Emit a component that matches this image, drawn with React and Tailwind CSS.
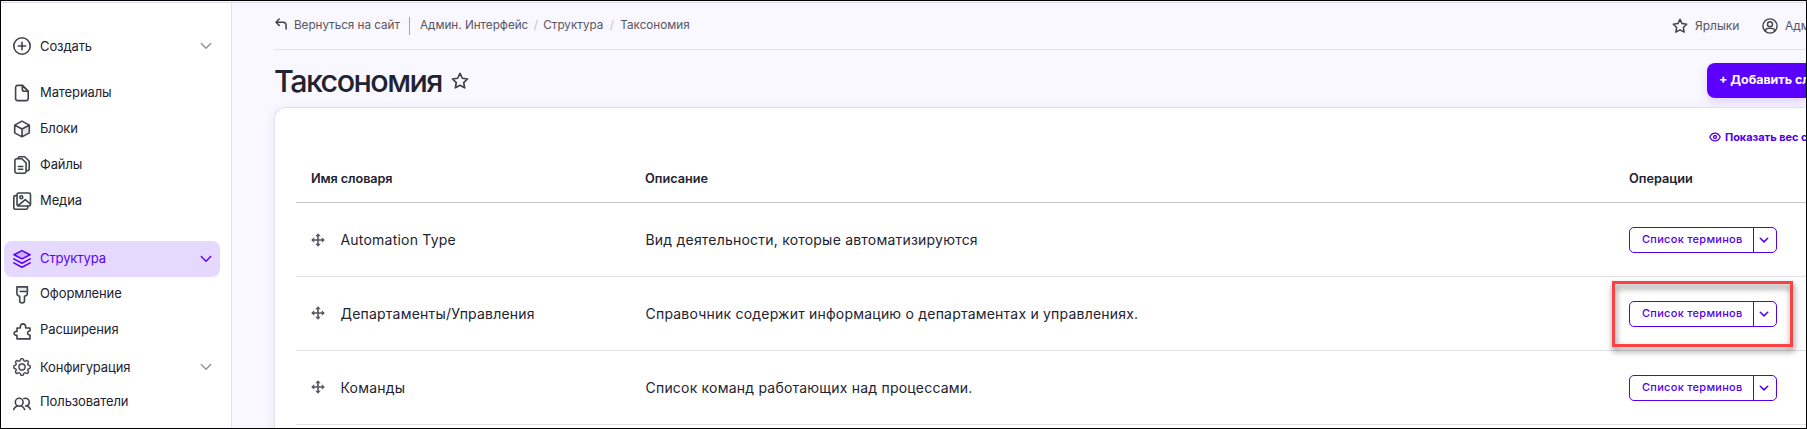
import React from "react";
import { BsGear } from "react-icons/bs";

function Svg({ children, className = "size-5", box = "0 0 20 20", width = 1.6 }) {
  return (
    <svg
      viewBox={box}
      className={"block shrink-0 " + className}
      fill="none"
      stroke="currentColor"
      strokeWidth={width}
      strokeLinecap="round"
      strokeLinejoin="round"
    >
      {children}
    </svg>
  );
}

const icons = {
  plus: (
    <Svg>
      <circle cx="10" cy="10" r="8.2" />
      <path d="M10 6.3v7.4M6.3 10h7.4" />
    </Svg>
  ),
  file: (
    <Svg>
      <path d="M10.3 3.4H5.6a2 2 0 0 0-2 2v11.2a2 2 0 0 0 2 2h8.6a2 2 0 0 0 2-2V9.3z" />
      <path d="M10.3 3.4v3.9a2 2 0 0 0 2 2h3.9z" fill="#e4e5e7" />
    </Svg>
  ),
  box: (
    <Svg>
      <path d="M17.3 7.1v7.8L10 18.9v-8z" fill="#e4e5e7" stroke="none" />
      <path d="M10 3.1l7.3 4v7.8l-7.3 4-7.3-4V7.1zM2.9 7.2L10 11l7.1-3.8M10 11v7.7" />
    </Svg>
  ),
  files: (
    <Svg>
      <path d="M4.8 4.7h5.1l4.2 4.2v8.4a1.9 1.9 0 0 1-1.9 1.9H4.8a1.9 1.9 0 0 1-1.9-1.9V6.6a1.9 1.9 0 0 1 1.9-1.9z" />
      <path d="M6 4.5c0-1 .7-1.7 1.7-1.7h5l4.5 4.4v7.6c0 1.3-.9 2-2.6 2.2M6.4 12.5h4.4M6.4 15.3h4.4" />
    </Svg>
  ),
  media: (
    <Svg>
      <rect x="5" y="3" width="13.5" height="13" rx="1.6" />
      <circle cx="9.3" cy="7.2" r="1.5" />
      <path d="M6 15.7l7.3-6.1 5 4.4" />
      <path d="M4.7 5.6H3.3a1.5 1.5 0 0 0-1.5 1.5v10.4a1.7 1.7 0 0 0 1.7 1.7h10.7a1.5 1.5 0 0 0 1.5-1.5v-1.4" />
    </Svg>
  ),
  layers: (
    <Svg>
      <path d="M10 1.6l8 4.1-8 4.2-8-4.2z" fill="#cdb2fb" />
      <path d="M1.8 9.9l8.2 4.3 8.2-4.3M1.8 13.9l8.2 4.3 8.2-4.3" />
    </Svg>
  ),
  brush: (
    <Svg>
      <path d="M5 2h10.4v4.8H5z" fill="#e4e5e7" stroke="none" />
      <path d="M4.9 1.9h10.5v6.4c0 1.7-1.2 2.6-2.9 2.9v4.4a2.4 2.4 0 0 1-4.8 0v-4.4c-1.7-.3-2.8-1.2-2.8-2.9zM15.2 6.5H8.4" />
    </Svg>
  ),
  puzzle: (
    <Svg>
      <path d="M5 7h3.4C8 4.5 9.1 2.9 11 2.9s3 1.6 2.6 4.1H18v3c-3.2-.6-3.2 4.6 0 4v3.9H5v-3.6c-3.9.5-3.9-4.4 0-3.9z" />
    </Svg>
  ),
  gear: <BsGear className="mx-px size-[18px] shrink-0" stroke="currentColor" strokeWidth="0.3" />,
  users: (
    <Svg>
      <circle cx="7.2" cy="9.2" r="3.9" />
      <path d="M1.7 16.4c.7-1.6 2-2.7 3.5-3.3M9.3 13.1c1.5.6 2.6 1.7 3.3 3.3M11.9 5.6c2.6-1.2 5.4.6 5.4 3.5 0 2.4-1.7 3.9-3.8 3.9h1.4c1.7.4 2.9 1.6 3.5 3.3" />
    </Svg>
  ),
};

function Star({ className }) {
  return (
    <Svg className={className} box="0 0 16 16" width={1.5}>
      <path d="M8 1.3l2.05 4.25 4.65.65-3.4 3.25.85 4.65L8 11.85 3.85 14.1l.85-4.65L1.3 6.2l4.65-.65z" />
    </Svg>
  );
}

function Chevron({ className }) {
  return (
    <Svg className={className} box="0 0 12 12" width={1.4}>
      <path d="M1.3 3.5L6 8.2l4.7-4.7" />
    </Svg>
  );
}

function NavItem({ icon, label, chevron, active, className = "", lift = "" }) {
  return (
    <li
      className={
        "flex h-9 w-[216px] items-center rounded-lg pr-[9px] pl-2 " +
        (active ? "bg-[#e6d9ff] text-[#5b00ff] " : "text-[#414349] ") +
        className
      }
    >
      {icons[icon]}
      <span
        className={
          "ml-2 flex-1 text-[13px] leading-5 tracking-[-0.1px] " +
          (active ? "text-[#5b00ff] " : "text-[#222330] ") +
          lift
        }
      >
        {label}
      </span>
      {chevron && <Chevron className={"mr-[-0.5px] size-3 " + (active ? "" : "text-[#8e929c]")} />}
    </li>
  );
}

function Sidebar() {
  return (
    <nav className="w-[231px] shrink-0 border-r border-[#e3e1ec] bg-white pt-[25px] pl-[3px]">
      <ul>
        <NavItem icon="plus" label="Создать" chevron />
        <NavItem icon="file" label="Материалы" className="mt-2.5" />
        <NavItem icon="box" label="Блоки" />
        <NavItem icon="files" label="Файлы" />
        <NavItem icon="media" label="Медиа" />
        <NavItem icon="layers" label="Структура" chevron active className="mt-[23px]" lift="pb-0.5" />
        <NavItem icon="brush" label="Оформление" lift="pb-1" />
        <NavItem icon="puzzle" label="Расширения" lift="pb-1" />
        <NavItem icon="gear" label="Конфигурация" chevron />
        <NavItem icon="users" label="Пользователи" lift="pb-1" />
      </ul>
    </nav>
  );
}

function TopBar() {
  return (
    <header className="flex h-[47px] items-center border-b border-[#e2e0ea] text-[11.7px] whitespace-nowrap text-[#55565f]">
      <Svg className="mb-1 ml-px size-3 text-[#414349]" box="0 0 12 12" width={1.5}>
        <path d="M4.2 1L1 4.2l3.2 3.2M1.2 4.2h6.6a3.3 3.3 0 0 1 3.3 3.3v3.4" />
      </Svg>
      <span className="ml-[7px] w-[106px] tracking-[-0.03px]">Вернуться на сайт</span>
      <span className="ml-[9px] h-[18px] w-px bg-[#a5a4b0]" />
      <nav className="ml-[10px] flex items-center">
        <span>Админ. Интерфейс</span>
        <span className="w-[15px] text-center text-[#c3c2cc]">/</span>
        <span>Структура</span>
        <span className="w-[17px] text-center text-[#c3c2cc]">/</span>
        <span>Таксономия</span>
      </nav>
      <div className="ml-auto flex w-[134px] shrink-0 items-center">
        <Star className="size-4 text-[#414349]" />
        <span className="ml-[7px] w-[66px] shrink-0 text-[12px]">Ярлыки</span>
        <Svg className="ml-px size-4 text-[#414349]" box="0 0 16 16" width={1.4}>
          <circle cx="8" cy="8" r="7.1" />
          <circle cx="8" cy="6.3" r="2.5" />
          <path d="M3.3 13.1c.3-1.9 1.5-2.7 3-2.7h3.4c1.5 0 2.7.8 3 2.7" />
        </Svg>
        <span className="ml-[7px] text-[12px]">Админ</span>
      </div>
    </header>
  );
}

function MoveIcon({ className }) {
  return (
    <svg viewBox="0 0 14 14" className={"size-3.5 shrink-0 text-[#545560] " + className} fill="currentColor">
      <path d="M6.2 2.5h1.6v9H6.2zM2.5 6.2h9v1.6h-9z" />
      <path d="M7 .2l2.7 3H4.3zM7 13.8l2.7-3H4.3zM.2 7l3-2.7v5.4zM13.8 7l-3-2.7v5.4z" />
    </svg>
  );
}

function TermsButton() {
  return (
    <div className="flex h-[26px] w-[148px] items-center rounded-[5px] border border-[#5300eb] text-[#5300eb]">
      <span className="w-[123px] pb-px pl-3 text-[11px] font-[450] tracking-[0.28px] whitespace-nowrap">
        Список терминов
      </span>
      <span className="flex h-full flex-1 items-center border-l border-[#5300eb] pl-[5px]">
        <Svg className="size-2.5" box="0 0 10 10" width={1.5}>
          <path d="M1.3 3.3L5 6.9l3.7-3.6" />
        </Svg>
      </span>
    </div>
  );
}

const rows = [
  { name: "Automation Type", description: "Вид деятельности, которые автоматизируются" },
  { name: "Департаменты/Управления", description: "Справочник содержит информацию о департаментах и управлениях." },
  { name: "Команды", description: "Список команд работающих над процессами." },
];

function VocabularyTable() {
  return (
    <div className="ml-[21px] text-[#222330]">
      <div className="flex h-[48px] items-center border-b border-[#c4c4c9] pl-[15px] text-[12.7px] font-semibold">
        <span className="w-[334px] tracking-[-0.1px]">Имя словаря</span>
        <span className="w-[984px]">Описание</span>
        <span>Операции</span>
      </div>
      {rows.map((row, i) => (
        <div
          key={row.name}
          className="flex h-[74px] items-center border-b border-[#e1e1e4] pl-[15px] text-[14px] tracking-[0.21px]"
        >
          <MoveIcon className={i > 0 ? "mb-0.5" : ""} />
          <span className="ml-[15.5px] w-[304.5px]">{row.name}</span>
          <span className="w-[984px] pl-[0.5px]">{row.description}</span>
          <div className="relative">
            <TermsButton />
            {i === 1 && (
              <div className="absolute -top-5 -left-[17px] h-[66px] w-[181px] border-[3px] border-[#fb4242] drop-shadow-[1px_4px_3px_rgba(0,0,0,0.55)]" />
            )}
          </div>
        </div>
      ))}
    </div>
  );
}

export default function App() {
  return (
    <div className="h-[429px] w-full overflow-hidden border border-black bg-[#f9f7ff] pt-px font-['Inter','Noto_Sans',sans-serif]">
      <div className="flex h-[426px] border-t border-[#dcdae3]">
        <Sidebar />
        <main className="min-w-0 flex-1 overflow-hidden pl-[42px]">
          <TopBar />
          <div className="flex h-[57px] items-start">
            <h1 className="mt-[11px] w-[178px] text-[30.5px] leading-10 font-medium tracking-[-1.55px] text-[#222330]">
              Таксономия
            </h1>
            <Star className="mt-[22px] -ml-px size-[18px] text-[#414349]" />
            <div className="mt-[13px] ml-auto flex h-[35px] w-[99px] shrink-0 items-center rounded-l-lg bg-[#5b00ff] pb-px pl-[12px] text-[12.4px] font-bold whitespace-nowrap text-white shadow-[0_4px_8px_rgba(91,0,255,0.15)]">
              + Добавить словарь
            </div>
          </div>
          <section className="h-[340px] rounded-tl-xl border-t border-l border-[#e3e2ea] bg-white shadow-[0_2px_12px_rgba(60,40,140,0.08)]">
            <div className="flex h-[47px] items-end pb-[10px]">
              <div className="ml-auto flex w-[97px] shrink-0 items-center text-[11px] font-bold whitespace-nowrap text-[#5300eb]">
                <Svg className="size-3" box="0 0 12 12" width={1.3}>
                  <path d="M.8 6C2 3.3 3.8 2.1 6 2.1S10 3.3 11.2 6C10 8.7 8.2 9.9 6 9.9S2 8.7.8 6z" />
                  <circle cx="6" cy="6" r="1.5" />
                </Svg>
                <span className="ml-1 tracking-[-0.05px]">Показать вес строк</span>
              </div>
            </div>
            <VocabularyTable />
          </section>
        </main>
      </div>
    </div>
  );
}
